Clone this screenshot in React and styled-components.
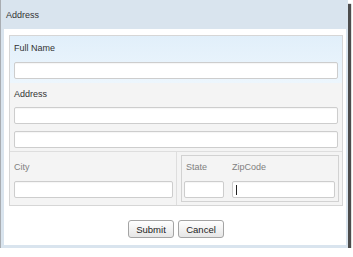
import React from 'react'
import styled, { createGlobalStyle } from 'styled-components'

const GlobalStyle = createGlobalStyle`
  body {
    margin: 0;
    background: #ffffff;
    font-family: "Liberation Sans", Arial, sans-serif;
  }
`

const Window = styled.div`
  width: 348px;
  height: 248px;
  box-sizing: border-box;
  border-left: 1px solid #a9adb2;
  background: #d9e4ee;
  display: flex;
  flex-direction: column;
  box-shadow: 3px 4px 1px rgba(45, 45, 45, 0.85);
`

const Header = styled.div`
  height: 29px;
  flex: none;
  display: flex;
  align-items: center;
  padding-left: 5px;
  font-size: 9px;
  color: #333;
`

const Body = styled.div`
  flex: 1;
  margin: 0 2px 3px 3px;
  background: #fff;
  padding: 6px 3px 0 5px;
  display: flex;
  flex-direction: column;
`

const Panel = styled.div`
  border: 1px solid #d6d6d6;
  display: flex;
  flex-direction: column;
`

const Section = styled.div`
  display: flex;
  flex-direction: column;
  padding: ${p => p.$pad};
  background: ${p => (p.$active ? 'linear-gradient(#e1effa, #edf6fd)' : '#f4f4f4')};
  border-bottom: ${p => (p.$divider ? '1px solid #dedede' : 'none')};
`

const Label = styled.div`
  height: 11px;
  line-height: 11px;
  font-size: 9px;
  color: ${p => (p.$muted ? '#808080' : '#333')};
  margin: 0 0 ${p => p.$gap || 8}px ${p => p.$indent || 0}px;
`

const Input = styled.input`
  display: block;
  box-sizing: border-box;
  width: 100%;
  height: 17px;
  margin: 0;
  border: 1px solid #cdcdcd;
  border-radius: 2px;
  background: #fff;
  box-shadow: inset 0 1px 1px rgba(0, 0, 0, 0.04);
  outline: none;
  & + & {
    margin-top: 7px;
  }
`

const Row = styled.div`
  display: flex;
  background: #f4f4f4;
  height: 53px;
`

const CityCell = styled.div`
  width: 167px;
  box-sizing: border-box;
  border-right: 1px solid #dedede;
  padding: 10px 3px 0 4px;
`

const GroupCell = styled.div`
  flex: 1;
  padding: 3px 3px 3px 4px;
  display: flex;
`

const GroupBox = styled.div`
  flex: 1;
  border: 1px solid #d2d2d2;
  display: flex;
  gap: 8px;
  padding: 6px 3px 0 2px;
`

const Field = styled.div`
  width: ${p => p.$w || 'auto'};
  flex: ${p => (p.$w ? 'none' : '1')};
  position: relative;
`

const Caret = styled.span`
  position: absolute;
  left: 4px;
  top: 23px;
  width: 1px;
  height: 10px;
  background: #222;
`

const Actions = styled.div`
  display: flex;
  justify-content: center;
  gap: 4px;
  padding-top: 14px;
`

const Button = styled.button`
  width: 46px;
  height: 18px;
  padding: 0;
  border: 1px solid #a4a4a4;
  border-radius: 3px;
  background: linear-gradient(#ffffff, #e6e6e6);
  font-family: "Liberation Sans", Arial, sans-serif;
  font-size: 9.5px;
  color: #222;
`

export default function App() {
  return (
    <>
      <GlobalStyle />
      <Window>
        <Header>Address</Header>
        <Body>
          <Panel>
            <Section $active $pad="7px 4px 4px 4px">
              <Label>Full Name</Label>
              <Input />
            </Section>
            <Section $divider $pad="6px 4px 3px 4px">
              <Label $gap={7}>Address</Label>
              <Input />
              <Input />
            </Section>
            <Row>
              <CityCell>
                <Label $muted>City</Label>
                <Input />
              </CityCell>
              <GroupCell>
                <GroupBox>
                  <Field $w="40px">
                    <Label $muted $indent={2}>State</Label>
                    <Input />
                  </Field>
                  <Field>
                    <Label $muted>ZipCode</Label>
                    <Input />
                    <Caret />
                  </Field>
                </GroupBox>
              </GroupCell>
            </Row>
          </Panel>
          <Actions>
            <Button>Submit</Button>
            <Button>Cancel</Button>
          </Actions>
        </Body>
      </Window>
    </>
  )
}
